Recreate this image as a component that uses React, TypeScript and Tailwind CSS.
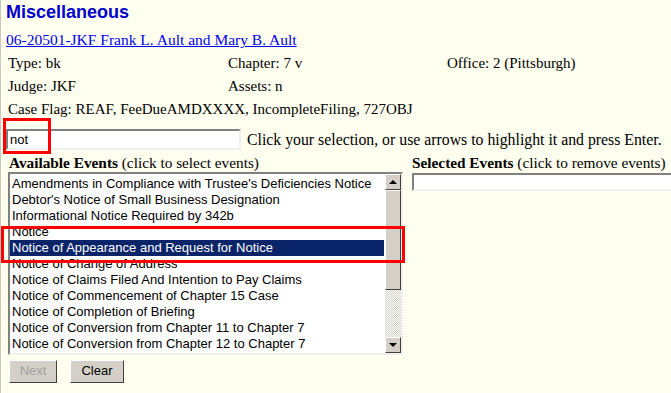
import React from "react";

const events = [
  "Amendments in Compliance with Trustee's Deficiencies Notice",
  "Debtor's Notice of Small Business Designation",
  "Informational Notice Required by 342b",
  "Notice",
  "Notice of Appearance and Request for Notice",
  "Notice of Change of Address",
  "Notice of Claims Filed And Intention to Pay Claims",
  "Notice of Commencement of Chapter 15 Case",
  "Notice of Completion of Briefing",
  "Notice of Conversion from Chapter 11 to Chapter 7",
  "Notice of Conversion from Chapter 12 to Chapter 7",
];

const serif = "font-['Liberation_Serif','Times_New_Roman',serif]";
const sans = "font-['Liberation_Sans',Arial,sans-serif]";

const App: React.FC = () => {
  return (
    <div className={`w-[671px] h-[393px] overflow-hidden bg-[#fffff0] border-l border-[#c8c8c0] pl-[5px] text-black ${serif}`}>
      <h1 className={`${sans} text-[18px] font-bold text-[#0000cc] leading-[22px] pt-[1px]`}>Miscellaneous</h1>
      <a href="#" className="block text-[15.5px] text-[#0000ee] underline leading-[18px] mt-[8px]">
        06-20501-JKF Frank L. Ault and Mary B. Ault
      </a>
      <div className="grid grid-cols-[220px_219px_1fr] text-[15px] leading-[23px] pl-[2px] mt-[3px]">
        <div>Type: bk</div>
        <div>Chapter: 7 v</div>
        <div>Office: 2 (Pittsburgh)</div>
        <div>Judge: JKF</div>
        <div>Assets: n</div>
        <div></div>
        <div className="col-span-3">Case Flag: REAF, FeeDueAMDXXXX, IncompleteFiling, 727OBJ</div>
      </div>

      <div className="relative flex items-center gap-[6px] mt-[7px]">
        <input
          type="text"
          value="not"
          readOnly
          className={`${sans} w-[235px] h-[21px] bg-white text-[13px] px-[2px] border-2 border-t-[#808080] border-l-[#808080] border-b-[#f0f0f0] border-r-[#f0f0f0] outline-none`}
        />
        <span className="text-[15.8px] whitespace-nowrap">Click your selection, or use arrows to highlight it and press Enter.</span>
        <div className="absolute left-[-3px] top-[-10px] w-[48px] h-[36px] border-[3px] border-[#ff0000]" />
      </div>

      <div className="flex mt-[2px]">
        <div className="w-[406px] shrink-0">
          <div className="text-[15.3px] leading-[18px] pl-[3px] whitespace-nowrap">
            <b>Available Events</b> (click to select events)
          </div>
          <div className="relative flex w-[395px] h-[183px] ml-[2px] bg-white border-2 border-t-[#808080] border-l-[#808080] border-b-[#f0f0f0] border-r-[#f0f0f0]">
            <ul className={`${sans} flex-1 text-[13px] leading-[16px] pt-[2px] pr-[1px]`}>
              {events.map((e, i) => (
                <li
                  key={e}
                  className={i === 4 ? "bg-[#0a246a] text-white pl-[2px]" : "pl-[2px]"}
                >
                  {e}
                </li>
              ))}
            </ul>
            <div className="w-[16px] flex flex-col bg-[repeating-conic-gradient(#d4d0c8_0_25%,#ffffff_0_50%)] bg-[length:2px_2px]">
              <div className="h-[16px] bg-[#d4d0c8] border border-t-white border-l-white border-b-[#404040] border-r-[#404040] flex items-center justify-center">
                <div className="w-0 h-0 border-x-[4px] border-x-transparent border-b-[4px] border-b-black" />
              </div>
              <div className="h-[100px] bg-[#d4d0c8] border border-t-white border-l-white border-b-[#404040] border-r-[#404040]" />
              <div className="flex-1" />
              <div className="h-[16px] bg-[#d4d0c8] border border-t-white border-l-white border-b-[#404040] border-r-[#404040] flex items-center justify-center">
                <div className="w-0 h-0 border-x-[4px] border-x-transparent border-t-[4px] border-t-black" />
              </div>
            </div>
            <div className="absolute left-[-9px] top-[52px] w-[404px] h-[37px] border-[3px] border-[#ff0000]" />
          </div>
          <div className={`${sans} flex gap-[13px] mt-[5px] ml-[3px] text-[13px]`}>
            <button className="w-[48px] h-[23px] bg-[#d4d0c8] text-[#a0a0a0] border border-t-white border-l-white border-b-[#404040] border-r-[#404040]">
              Next
            </button>
            <button className="w-[54px] h-[23px] bg-[#d4d0c8] text-black border border-t-white border-l-white border-b-[#404040] border-r-[#404040]">
              Clear
            </button>
          </div>
        </div>
        <div className="flex-1 min-w-0">
          <div className="text-[15.3px] leading-[18px] whitespace-nowrap">
            <b>Selected Events</b> (click to remove events)
          </div>
          <div className="h-[18px] w-[300px] mt-[1px] bg-white border-2 border-t-[#808080] border-l-[#808080] border-b-[#f0f0f0] border-r-[#f0f0f0]" />
        </div>
      </div>
    </div>
  );
};

export default App;
